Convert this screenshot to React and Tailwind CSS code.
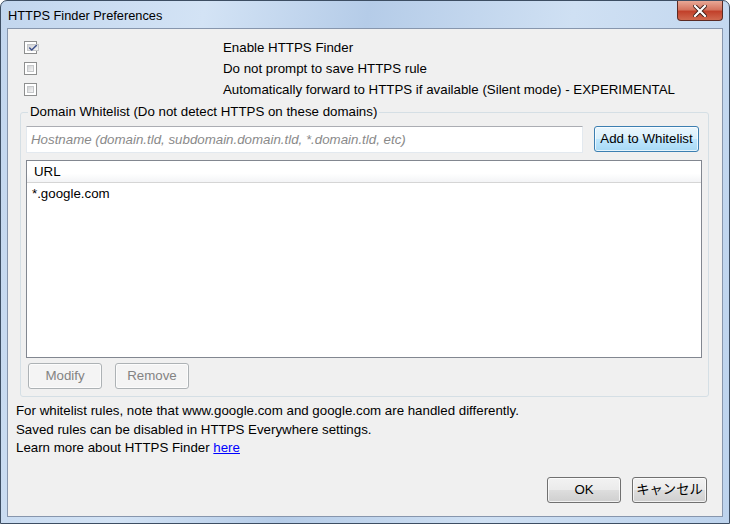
import { Check } from "lucide-react";

const font = { fontFamily: '"Liberation Sans", "Noto Sans CJK JP", sans-serif' };

const CheckBox = ({ checked }) => (
  <span className="w-[13px] h-[13px] border border-[#8e8f8f] bg-white p-[2px] flex shrink-0">
    <span className="flex-1 border border-[#c6c8ca] bg-gradient-to-br from-[#d1d2d4] to-[#f6f6f6] flex items-center justify-center">
      {checked && <Check className="w-[10px] h-[10px] text-[#3c4f8a]" strokeWidth={3.5} />}
    </span>
  </span>
);

const OptionRow = ({ checked, label }) => (
  <div className="flex items-center h-[21px]">
    <div className="w-[215px] pl-[16px] flex">
      <CheckBox checked={checked} />
    </div>
    <span>{label}</span>
  </div>
);

const WinButton = ({ children, className = "", disabled, focused }) => {
  let look =
    "border-[#707070] text-black bg-[linear-gradient(#f2f2f2_0%,#ebebeb_48%,#dddddd_52%,#cfcfcf_100%)]";
  if (disabled) look = "border-[#adb2b5] text-[#838383] bg-[#f4f4f4]";
  if (focused)
    look =
      "border-[#3c7fb1] text-black bg-[linear-gradient(#eaf6fd_0%,#d9f0fc_48%,#bee6fd_52%,#a7d9f5_100%)] shadow-[inset_0_0_0_1px_#9fd6f2]";
  return (
    <button
      className={`h-[26px] rounded-[3px] border flex items-center justify-center shadow-[inset_0_0_0_1px_rgba(255,255,255,0.7)] ${look} ${className}`}
    >
      {children}
    </button>
  );
};

export default function App() {
  return (
    <div
      style={font}
      className="w-[730px] h-[524px] text-[13.3px] text-black rounded-t-[7px] border border-[#3d4e63] bg-[linear-gradient(100deg,#c2d6ee_0%,#d3e3f5_25%,#b5cce8_45%,#cfe0f3_70%,#bdd3ed_100%)] flex flex-col px-[6px] pb-[6px]"
    >
      <div className="h-[27px] flex items-start justify-between">
        <span className="mt-[5px] ml-[1px] text-[12.8px]">HTTPS Finder Preferences</span>
        <div className="w-[46px] h-[20px] rounded-b-[4px] border border-t-0 border-[#5b2a23] bg-[linear-gradient(#e8a896_0%,#d47560_45%,#c2412b_55%,#d0694f_100%)] flex items-center justify-center">
          <svg width="14" height="12" viewBox="0 0 14 12">
            <path d="M2 1 L12 11 M12 1 L2 11" stroke="#3d1d17" strokeWidth="4" strokeLinecap="square" />
            <path d="M2 1 L12 11 M12 1 L2 11" stroke="#ffffff" strokeWidth="2.2" strokeLinecap="square" />
          </svg>
        </div>
      </div>

      <div className="flex-1 bg-[#f0f0f0] border border-[#8796ad] flex flex-col">
        <div className="pt-[8px]">
          <OptionRow checked label="Enable HTTPS Finder" />
          <OptionRow label="Do not prompt to save HTTPS rule" />
          <OptionRow label="Automatically forward to HTTPS if available (Silent mode) - EXPERIMENTAL" />
        </div>

        <fieldset className="ml-[12px] mr-[13px] mt-[3px] border border-[#d5dfe5] rounded-[3px] px-[5px] pb-[7px]">
          <legend className="ml-[2px] px-[2px] leading-[18px]">Domain Whitelist (Do not detect HTTPS on these domains)</legend>
          <div className="flex items-start gap-[11px] mt-[5px] pr-[4px]">
            <div className="h-[27px] flex-1 bg-white border border-[#e3e9ef] border-t-[#abadb3] flex items-center px-[4px]">
              <span className="italic text-[#8a8a8a]">
                Hostname (domain.tld, subdomain.domain.tld, *.domain.tld, etc)
              </span>
            </div>
            <WinButton focused className="w-[105px]">Add to Whitelist</WinButton>
          </div>
          <div className="mt-[7px] mr-[1px] h-[198px] bg-white border border-[#828790] flex flex-col">
            <div className="h-[22px] flex items-center pl-[7px] bg-[linear-gradient(#ffffff_0%,#ffffff_60%,#f3f4f6_100%)] border-b border-[#d5d5d5]">
              URL
            </div>
            <div className="pl-[5px] pt-[2px] h-[20px] flex items-center">*.google.com</div>
          </div>
          <div className="flex gap-[13px] mt-[5px] ml-[2px]">
            <WinButton disabled className="w-[74px]">Modify</WinButton>
            <WinButton disabled className="w-[74px]">Remove</WinButton>
          </div>
        </fieldset>

        <div className="pl-[8px] mt-[5px] leading-[18.5px]">
          <div>For whitelist rules, note that www.google.com and google.com are handled differently.</div>
          <div>Saved rules can be disabled in HTTPS Everywhere settings.</div>
          <div>
            Learn more about HTTPS Finder <a className="text-[#0000ff] underline" href="#">here</a>
          </div>
        </div>

        <div className="mt-auto mb-[13px] mr-[15px] flex justify-end gap-[11px]">
          <WinButton className="w-[74px]">OK</WinButton>
          <WinButton className="w-[75px]">キャンセル</WinButton>
        </div>
      </div>
    </div>
  );
}
